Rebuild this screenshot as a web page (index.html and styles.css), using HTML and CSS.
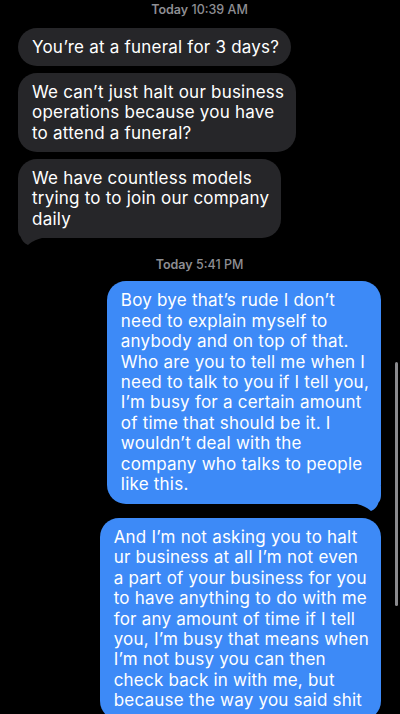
FILE: index.html
```html
<!DOCTYPE html>
<html lang="en">
<head>
<meta charset="utf-8">
<title>Messages</title>
<link rel="stylesheet" href="styles.css">
</head>
<body>
<main class="thread">
  <div class="stamp"><b>Today</b> 10:39 AM</div>
  <section class="group incoming">
    <div class="bubble in">You’re at a funeral for 3 days?</div>
    <div class="bubble in">We can’t just halt our business<br>operations because you have<br>to attend a funeral?</div>
    <div class="bubble in tailed">We have countless models<br>trying to to join our company<br>daily<svg class="tail" viewBox="0 0 26 27" width="26" height="27"><path d="M0 0 H24 V8 C24 13 23 15 21.5 16.5 C20.5 20 18 23.5 14 25 C11 22.5 7 19.5 0 18 Z"/></svg></div>
  </section>
  <div class="stamp stamp2"><b>Today</b> 5:41 PM</div>
  <section class="group outgoing">
    <div class="bubble out tailed">Boy bye that’s rude I don’t<br>need to explain myself to<br>anybody and on top of that.<br>Who are you to tell me when I<br>need to talk to you if I tell you,<br>I’m busy for a certain amount<br>of time that should be it. I<br>wouldn’t deal with the<br>company who talks to people<br>like this.<svg class="tail" viewBox="0 0 26 27" width="26" height="27"><path d="M0 0 H24 V8 C24 13 23 15 21.5 16.5 C20.5 20 18 23.5 14 25 C11 22.5 7 19.5 0 18 Z"/></svg></div>
    <div class="bubble out second">And I’m not asking you to halt<br>ur business at all I’m not even<br>a part of your business for you<br>to have anything to do with me<br>for any amount of time if I tell<br>you, I’m busy that means when<br>I’m not busy you can then<br>check back in with me, but<br>because the way you said shit</div>
  </section>
</main>
<div class="scroll-indicator"></div>
</body>
</html>
```
FILE: styles.css
```css
html, body {
  margin: 0;
  padding: 0;
  background: #000;
  overflow: hidden;
  height: 714px;
}

body {
  font-family: Inter, "Liberation Sans", sans-serif;
  color: #fff;
  position: relative;
}

.thread {
  display: flex;
  flex-direction: column;
  padding: 2px 19px 0 18px;
}

.stamp {
  align-self: center;
  font-size: 12.5px;
  line-height: 16px;
  font-weight: 500;
  color: #8e8e93;
  margin-bottom: 10px;
}

.stamp b {
  font-weight: 600;
}

.stamp2 {
  margin-top: 19px;
  margin-bottom: 8px;
}

.group {
  display: flex;
  flex-direction: column;
  gap: 6.5px;
}

.incoming { align-items: flex-start; }
.outgoing { align-items: flex-end; gap: 14px; }

.bubble {
  position: relative;
  isolation: isolate;
  font-size: 17px;
  line-height: 20.45px;
  letter-spacing: 0.22px;
  padding: 9px 12px 9px 14px;
  border-radius: 19px;
  white-space: nowrap;
}

.in {
  background: #262629;
}

.out {
  background: #3d8af7;
}

.tail {
  position: absolute;
  z-index: -1;
  bottom: -9px;
  display: block;
}

.out .tail {
  right: -2px;
  fill: #3d8af7;
}

.in .tail {
  left: -2px;
  fill: #262629;
  transform: scaleX(-1);
}

.scroll-indicator {
  position: absolute;
  left: 395px;
  top: 362px;
  width: 2.5px;
  height: 244px;
  border-radius: 2px;
  background: #8a8a8e;
}
```
